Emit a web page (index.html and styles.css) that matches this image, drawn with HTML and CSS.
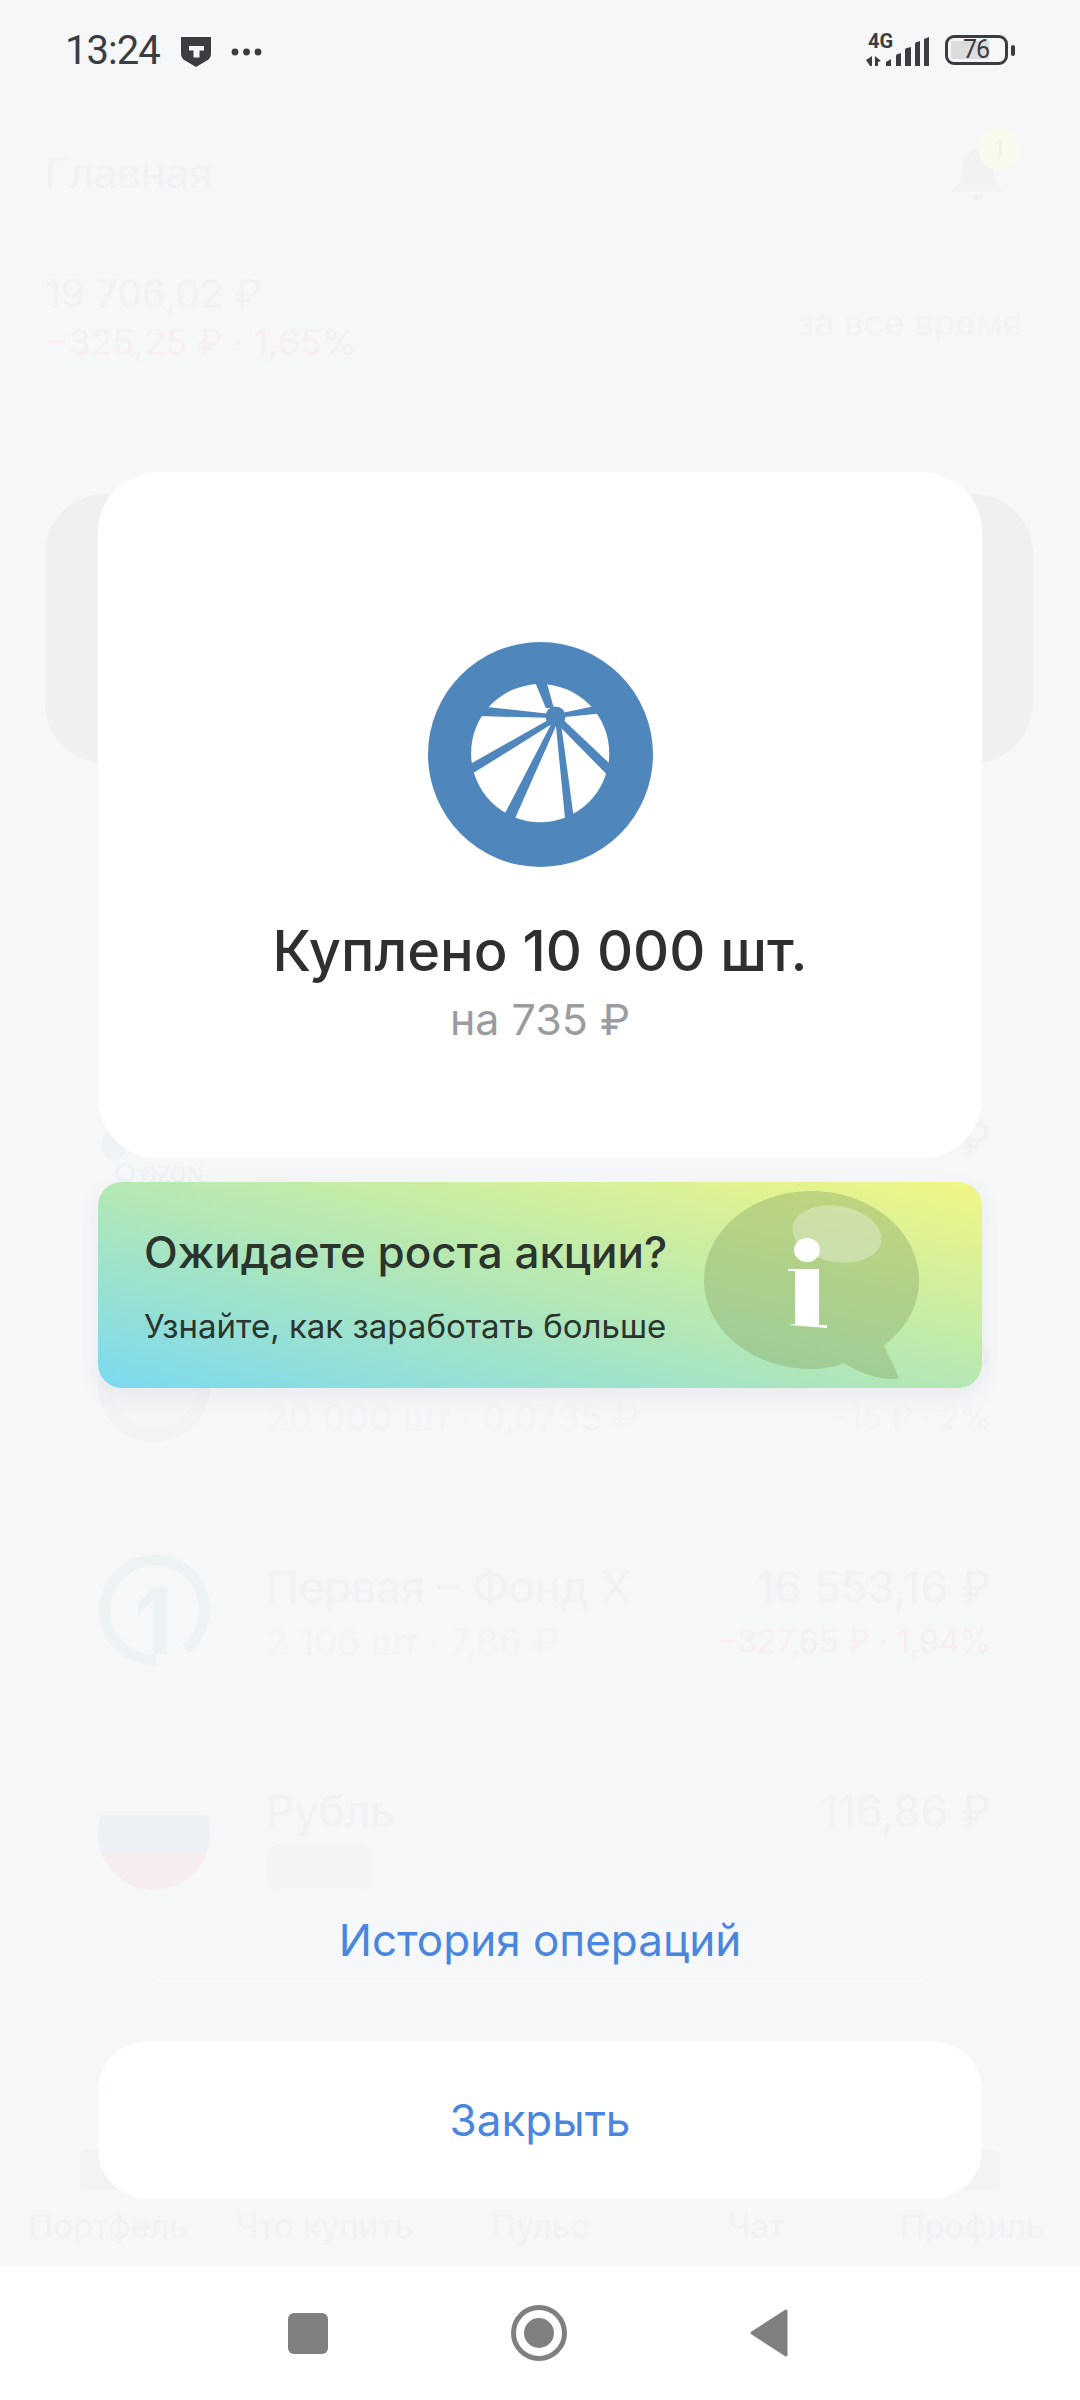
FILE: index.html
```html
<!DOCTYPE html>
<html lang="ru">
<head>
<meta charset="utf-8">
<title>Куплено</title>
<link rel="stylesheet" href="styles.css">
</head>
<body>
<div class="app">
  <header class="status">
    <div class="status-left">
      <span class="time">13:24</span>
      <svg class="shield" viewBox="0 0 30 30" aria-hidden="true"><path d="M0 0H30V16.5Q30 21 26 23.5L15 30L4 23.5Q0 21 0 16.5Z" fill="#3c3d40"/><path d="M8 9H23V13.5H18.5V20.5H12.5V13.5H8Z" fill="#f5f7f9"/></svg>
      <svg class="dots" viewBox="0 0 31 8" aria-hidden="true"><circle cx="4" cy="4" r="3.4"/><circle cx="15.5" cy="4" r="3.4"/><circle cx="27" cy="4" r="3.4"/></svg>
    </div>
    <div class="status-right">
      <div class="net">
        <span class="net-label">4G</span>
        <svg class="signal" viewBox="0 0 64 32" aria-hidden="true"><path d="M0 26L6 22V32H4ZM9 22L15 27L12 28V32H9ZM20 28L25 25V32H20ZM30 22Q30 20 32 20L35 19V32H30ZM39 16Q39 14 41 14L45 13V32H39ZM49 10Q49 8 51 8L54 7V32H49ZM58 5L63 3V32H58Z" fill="#3c3d40"/></svg>
      </div>
      <div class="battery"><span class="battery-fill"></span><span class="battery-num">76</span></div>
      <span class="battery-nub"></span>
    </div>
  </header>

  <main class="ghost">
    <div class="ghost-head">
      <h1 class="ghost-title">Главная</h1>
      <div class="bell">
        <svg viewBox="0 0 56 68" preserveAspectRatio="none" aria-hidden="true"><path d="M28 2C14 6 12 18 12 32C12 44 6 48 1 54H55C50 48 44 44 44 32C44 18 42 6 28 2ZM22 58H34Q33 66 28 66Q23 66 22 58Z" fill="#f0f2f3"/></svg>
        <span class="bell-badge">1</span>
      </div>
    </div>
    <div class="ghost-total">
      <div>
        <div class="ghost-sum">19 706,02 ₽</div>
        <div class="ghost-delta"><span class="ghost-red">−325,25 ₽ · 1,65%</span></div>
      </div>
      <span class="ghost-period">за все время</span>
    </div>
    <div class="ghost-card"></div>
    <div class="ghost-rows">
      <div class="ghost-row">
        <div class="ghost-logo ghost-ozon"><span class="ozon-label">OZON</span></div>
        <div class="ghost-info"><div class="ghost-name"></div></div>
        <div class="ghost-values"><div class="ghost-name">₽</div><div class="ghost-sub">%</div></div>
      </div>
      <div class="ghost-row">
        <div class="ghost-logo ghost-grey"></div>
        <div class="ghost-info"><div class="ghost-name"></div><div class="ghost-sub ghost-sub-left">20 000 шт · 0,0735 ₽</div></div>
        <div class="ghost-values"><div class="ghost-name">₽</div><div class="ghost-sub ghost-red">−15 ₽ · 2%</div></div>
      </div>
      <div class="ghost-row">
        <div class="ghost-logo">
          <svg viewBox="0 0 112 112" aria-hidden="true"><path d="M88 95A50 50 0 1 0 58 106" fill="none" stroke="#edf3f4" stroke-width="11"/><path d="M40 62V50L55 33H69V100H55V45Z" fill="#edf2f5"/></svg>
        </div>
        <div class="ghost-info"><div class="ghost-name">Первая – Фонд Х</div><div class="ghost-sub ghost-sub-left">2 106 шт · 7,86 ₽</div></div>
        <div class="ghost-values"><div class="ghost-name">16 553,16 ₽</div><div class="ghost-sub"><span class="ghost-red">−327,65 ₽ · 1,94%</span></div></div>
      </div>
      <div class="ghost-row">
        <div class="ghost-logo ghost-flag"></div>
        <div class="ghost-info"><div class="ghost-name">Рубль</div><div class="ghost-chip"></div></div>
        <div class="ghost-values"><div class="ghost-name">116,86 ₽</div></div>
      </div>
    </div>
    <nav class="ghost-tabs">
      <div class="tab"><span class="tab-icon"></span><span>Портфель</span></div>
      <div class="tab"><span class="tab-icon tab-icon-off"></span><span>Что купить</span></div>
      <div class="tab"><span class="tab-icon tab-icon-off"></span><span>Пульс</span></div>
      <div class="tab"><span class="tab-icon tab-icon-off"></span><span>Чат</span></div>
      <div class="tab"><span class="tab-icon"></span><span>Профиль</span></div>
    </nav>
  </main>

  <section class="modal">
    <div class="result">
      <svg class="logo" viewBox="0 0 674 674" aria-hidden="true">
        <circle cx="337" cy="337" r="337" fill="#4f86bb"/>
        <circle cx="336" cy="333" r="207" fill="#fff"/>
        <g fill="#4f86bb">
          <path d="M319 116L353 198H377L353 112Z"/>
          <path d="M170 194L355 214V227L152 222Z"/>
          <path d="M408 211L500 192L515 214L410 225Z"/>
          <path d="M120 369L360 234L372 245L127 398Z"/>
          <path d="M227 520L368 248H385L257 537Z"/>
          <path d="M411 534L383 248H399L436 521Z"/>
          <path d="M406 234L547 367L541 402L393 252Z"/>
          <circle cx="382" cy="223" r="30"/>
        </g>
      </svg>
      <h2 class="result-title">Куплено 10 000 шт.</h2>
      <p class="result-sub">на 735 ₽</p>
    </div>
    <div class="promo">
      <div class="promo-text">
        <div class="promo-title">Ожидаете роста акции?</div>
        <div class="promo-sub">Узнайте, как заработать больше</div>
      </div>
      <svg class="promo-art" viewBox="0 0 215 190" aria-hidden="true">
        <path d="M107 0C167 0 215 40 215 89C215 118 200 138 180 155C186 168 192 178 195 188C175 189 155 182 140 172C130 176 118 178 107 178C48 178 0 138 0 89C0 40 48 0 107 0Z" fill="#8aa96a" fill-opacity=".42"/>
        <ellipse cx="133" cy="43" rx="45" ry="28" transform="rotate(10 133 43)" fill="#fff" fill-opacity=".3"/>
        <ellipse cx="103" cy="59" rx="13" ry="12" fill="#fff"/>
        <path d="M84 78H115V134H123V137L84 134L91 133V80H84Z" fill="#fff"/>
      </svg>
    </div>
    <a class="history">История операций</a>
    <div class="history-line"></div>
    <button class="close">Закрыть</button>
  </section>

  <footer class="navbar">
    <span class="nav-square"></span>
    <span class="nav-circle"></span>
    <svg class="nav-back" viewBox="0 0 38 48" aria-hidden="true"><path d="M36 2V46L2 24Z" fill="#808080" stroke="#808080" stroke-width="3" stroke-linejoin="round"/></svg>
  </footer>
</div>
</body>
</html>
```

FILE: styles.css
```css
* { box-sizing: border-box; }
html, body { margin: 0; padding: 0; }
body { font-family: "Inter", "Noto Sans", sans-serif; background: #f5f7f9; }

.app {
  position: relative;
  width: 1080px;
  height: 2400px;
  overflow: hidden;
  background: #f5f7f9;
  display: flex;
  flex-direction: column;
}

/* status bar */
.status {
  height: 100px;
  flex: none;
  padding: 32px 0 0 65px;
  display: flex;
  justify-content: space-between;
  align-items: flex-start;
  color: #3c3d40;
}
.status-left { display: flex; align-items: center; height: 38px; }
.time { font: 400 40px/38px "Roboto", sans-serif; letter-spacing: -1px; width: 116px; }
.shield { width: 30px; height: 30px; display: block; margin-top: 1px; }
.dots { width: 31px; height: 8px; fill: #3c3d40; margin-left: 20px; margin-top: 1px; }
.status-right { display: flex; align-items: center; padding-right: 65px; padding-top: 2px; }
.net { width: 64px; height: 32px; position: relative; margin-right: 15px; }
.net-label { position: absolute; left: 2px; top: -3px; font: 700 20px/20px "Roboto", sans-serif; color: #3c3d40; }
.signal { width: 64px; height: 32px; display: block; position: absolute; left: 0; top: 0; }
.battery {
  position: relative;
  width: 63px;
  height: 30px;
  border: 3px solid #3c3d40;
  border-radius: 9px;
  display: flex;
  align-items: center;
  justify-content: center;
}
.battery-fill { position: absolute; left: 3px; top: 3px; bottom: 3px; width: 38px; background: #dcdcdc; }
.battery-num { position: relative; font: 400 25px/24px "Roboto", sans-serif; letter-spacing: -1px; color: #3c3d40; margin-right: 1px; }
.battery-nub { width: 4px; height: 11px; background: #3c3d40; border-radius: 2px; margin-left: 3px; }

/* washed-out page behind the dialog */
.ghost { flex: none; height: 2166px; padding: 0 45px 18px; display: flex; flex-direction: column; color: #f0f2f4; }
.ghost-head { height: 120px; padding-top: 47px; display: flex; justify-content: space-between; }
.ghost-title { margin: 0; font: 400 42px/52px "Inter", sans-serif; }
.bell { position: relative; width: 56px; height: 56px; margin: 0 29px 0 0; }
.bell svg { width: 56px; height: 56px; display: block; }
.bell-badge { position: absolute; right: -14px; top: -20px; width: 42px; height: 43px; border-radius: 50%; background: #f9f9ee; color: #f3f2de; font-size: 22px; line-height: 43px; text-align: center; }
.ghost-total { height: 274px; padding-top: 50px; display: flex; justify-content: space-between; align-items: flex-start; }
.ghost-sum { font: 400 39px/48px "Inter", sans-serif; }
.ghost-delta { font: 400 36px/48px "Inter", sans-serif; }
.ghost-red { color: #f7eff0; }
.ghost-period { font: 400 35px/40px "Inter", sans-serif; margin-top: 32px; color: #f1f3f4; margin-right: 13px; }
.ghost-card { flex: none; height: 269px; width: 988px; border-radius: 60px; background: #eff0f1; }
.ghost-rows { margin: 287px 0 0 53px; width: 893px; display: flex; flex-direction: column; }
.ghost-row { height: 224px; display: flex; align-items: center; gap: 56px; flex: none; }
.ghost-logo { width: 112px; height: 112px; border-radius: 50%; flex: none; position: relative; }
.ghost-logo svg { width: 112px; height: 112px; display: block; }
.ozon-label { position: absolute; left: 42px; top: 56px; font-size: 22px; line-height: 24px; color: #eef2f5; }
.ghost-ozon::before { content: ""; position: absolute; left: 17px; top: 57px; width: 14px; height: 14px; border: 3px solid #edf2f5; border-radius: 50%; }
.ghost-ozon::after { content: ""; position: absolute; left: 3px; top: 24px; width: 26px; height: 30px; border-radius: 50%; background: #eff3f6; }
.ghost-grey { background: #f3f5f7; border: 14px solid #f1f3f5; }
.ghost-flag { background: linear-gradient(#f5f7f9 33%, #edf1f6 33%, #edf1f6 67%, #f6edf0 67%); }
.ghost-info, .ghost-values { align-self: flex-start; margin-top: 61px; }
.ghost-info { flex: 1; min-width: 0; }
.ghost-name { font: 400 44px/56px "Inter", sans-serif; white-space: nowrap; min-height: 56px; }
.ghost-sub { font: 400 32px/44px "Inter", sans-serif; white-space: nowrap; margin-top: 5px; color: #f2f4f5; }
.ghost-sub-left { font-size: 37px; }
.ghost-values { text-align: right; }
.ghost-chip { width: 106px; height: 46px; margin-top: 5px; border-radius: 14px; background: #f2f4f6; }
.ghost-tabs { margin: auto -45px 0; display: grid; grid-template-columns: repeat(5, 1fr); font: 400 33px/44px "Inter", sans-serif; color: #f0f2f4; }
.tab { display: flex; flex-direction: column; align-items: center; gap: 14px; white-space: nowrap; }
.tab-icon { width: 56px; height: 40px; border-radius: 6px 6px 3px 3px; background: #f1f3f4; }
.tab-icon-off { visibility: hidden; }

/* dialog over the page */
.modal {
  position: absolute;
  inset: 0;
  padding: 472px 98px 0;
  display: flex;
  flex-direction: column;
  align-items: stretch;
}
.result {
  height: 686px;
  background: #fff;
  border-radius: 60px;
  padding-top: 170px;
  display: flex;
  flex-direction: column;
  align-items: center;
  flex: none;
}
.logo { width: 225px; height: 225px; display: block; }
.result-title { margin: 52px 0 0; font: 500 56px/64px "Inter", sans-serif; color: #2e2f31; }
.result-sub { margin: 10px 0 0; font: 400 43px/52px "Inter", sans-serif; color: #9a9c9f; }
.promo {
  margin-top: 24px;
  height: 206px;
  flex: none;
  border-radius: 24px;
  background: linear-gradient(to top right, #7bd9f0 0%, #b5e8b3 50%, #f2f684 100%);
  box-shadow: 0 8px 24px rgba(80, 90, 100, .08);
  padding: 0 0 0 46px;
  display: flex;
  align-items: flex-start;
  justify-content: space-between;
}
.promo-text { padding-top: 42px; }
.promo-title { font: 500 44px/56px "Inter", sans-serif; color: #2b342d; white-space: nowrap; }
.promo-sub { font: 400 33px/44px "Inter", sans-serif; color: #2b342d; margin-top: 24px; white-space: nowrap; }
.promo-art { width: 215px; height: 190px; margin: 9px 63px 0 0; flex: none; display: block; }
.history { margin-top: 524px; text-align: center; font: 400 44px/56px "Inter", sans-serif; color: #4a86dd; }
.history-line { height: 2px; margin: 12px 58px 0; background: #f8fafb; }
.close {
  margin-top: 59px;
  height: 158px;
  flex: none;
  border: 0;
  border-radius: 50px;
  background: #fff;
  font: 400 44px/56px "Inter", sans-serif;
  color: #4a86dd;
}

/* system navigation */
.navbar {
  position: relative;
  flex: none;
  height: 134px;
  background: #fff;
  display: flex;
  align-items: center;
  padding: 0 0 0 288px;
}
.nav-square { width: 40px; height: 41px; border-radius: 6px; background: #808080; margin-right: 183px; }
.nav-circle { width: 56px; height: 56px; border: 5px solid #808080; border-radius: 50%; display: flex; align-items: center; justify-content: center; margin-right: 183px; position: relative; }
.nav-circle::after { content: ""; width: 30px; height: 30px; border-radius: 50%; background: #808080; }
.nav-back { width: 38px; height: 48px; display: block; }
```
